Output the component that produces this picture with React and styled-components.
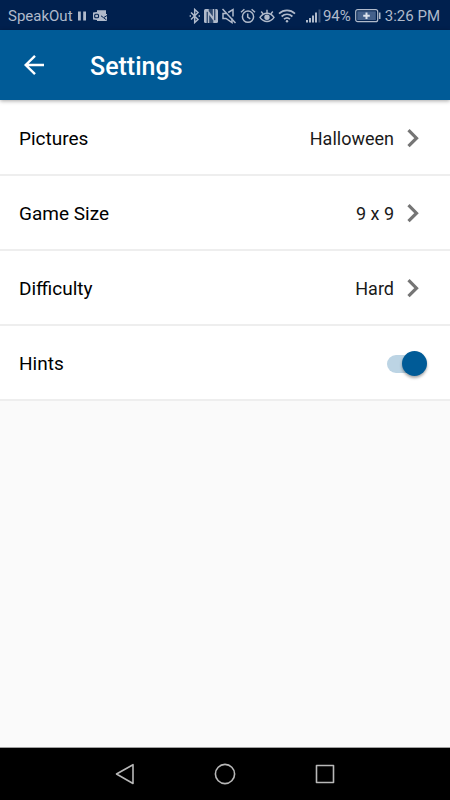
import React, { useState } from 'react';
import styled, { createGlobalStyle } from 'styled-components';

const GlobalStyle = createGlobalStyle`
    body {
        margin: 0;
        background: #fafafa;
        font-family: Roboto, 'Noto Sans', sans-serif;
    }
`;

const Screen = styled.div`
    min-height: 100vh;
    display: flex;
    flex-direction: column;
`;

const StatusBar = styled.div`
    box-sizing: border-box;
    height: 30px;
    padding: 1px 10px 0 8px;
    display: flex;
    align-items: center;
    justify-content: space-between;
    background: #00204e;
    color: #b0bacb;
    font-size: 15px;
    line-height: 20px;
    white-space: nowrap;
`;

const StatusGroup = styled.div`
    display: flex;
    align-items: center;
    gap: ${props => props.$gap}px;

    svg {
        display: block;
        flex: none;
    }
`;

const AppBar = styled.header`
    position: relative;
    height: 70px;
    padding: 0 20px;
    display: flex;
    align-items: center;
    gap: 42px;
    background: #005b97;
    box-shadow: 0 1px 4px rgba(0, 0, 0, 0.35);
`;

const BackButton = styled.button`
    width: 28px;
    height: 28px;
    padding: 0;
    border: none;
    background: none;
    color: white;
    cursor: pointer;

    svg {
        display: block;
    }
`;

const Title = styled.h1`
    margin: 0;
    padding-top: 4px;
    font-size: 25px;
    line-height: 32px;
    font-weight: 500;
    color: white;
`;

const List = styled.main`
    flex: 1;
`;

const Rows = styled.div`
    padding-top: 1px;
    background: white;
`;

const Row = styled.div`
    box-sizing: border-box;
    width: 100%;
    height: 75px;
    padding: 2px 23px 0 19px;
    display: flex;
    align-items: center;
    justify-content: space-between;
    border: none;
    border-bottom: 2px solid #eeeeee;
    background: white;
    color: black;
    font-family: inherit;
    font-size: 19px;
    line-height: 24px;
    text-align: left;
`;

const Value = styled.span`
    display: flex;
    align-items: center;
    gap: 12px;
    padding-right: 7px;
    font-size: 18px;
    color: #1a1a1a;
`;

const Switch = styled.input`
    appearance: none;
    position: relative;
    width: 40px;
    height: 26px;
    margin: 0;
    cursor: pointer;

    &::before {
        content: '';
        position: absolute;
        top: 4px;
        left: 0;
        width: 38px;
        height: 18px;
        border-radius: 9px;
        background: ${props => (props.checked ? '#bcd4e4' : '#c8c8c8')};
    }

    &::after {
        content: '';
        position: absolute;
        top: 0;
        left: ${props => (props.checked ? '15px' : '0')};
        width: 25px;
        height: 25px;
        border-radius: 50%;
        background: ${props => (props.checked ? '#005b97' : '#f5f5f5')};
        box-shadow: 0 2px 3px rgba(0, 0, 0, 0.35);
    }
`;

const NavBar = styled.nav`
    height: 52px;
    display: flex;
    align-items: center;
    justify-content: center;
    gap: 76px;
    border-top: 1px solid #a0a0a0;
    background: black;
`;

const NavButton = styled.button`
    width: 24px;
    height: 24px;
    padding: 0;
    border: none;
    background: none;
    color: #b8b8b8;
    cursor: pointer;

    svg {
        display: block;
    }
`;

const PauseIcon = () => (
    <svg width="10" height="10" viewBox="0 0 10 10" fill="currentColor">
        <path d="M0 0.5h2.8v9H0zM5.2 0.5H8v9H5.2z" />
    </svg>
);

const MailIcon = () => (
    <svg width="14" height="12" viewBox="0 0 14 12">
        <path d="M4 0.3h9v3.7h1V11H4z" fill="currentColor" />
        <path d="M8 5.8l2.6 1.9L14 5.5M11 8l2.5 2" fill="none" stroke="#00204e" strokeWidth="1" />
        <path d="M0 2.5l7.5-1v9l-7.5-1z" fill="currentColor" />
        <rect x="1.7" y="4.2" width="3.8" height="3.6" rx="1" fill="none" stroke="#00204e" strokeWidth="1.1" />
    </svg>
);

const BluetoothIcon = () => (
    <svg width="12" height="16" viewBox="0 0 12 16" fill="none" stroke="currentColor" strokeWidth="1.5">
        <path d="M2 4.5l7 7L5.7 14.5v-13L9 4.5l-7 7" />
        <path d="M0.6 8h1.4M9.6 8H11" />
    </svg>
);

const NfcIcon = () => (
    <svg width="14" height="16" viewBox="0 0 14 16" fill="none">
        <rect y="1" width="14" height="14" rx="1.5" fill="currentColor" />
        <path d="M3.2 15V3.8M10.8 1v11.2" stroke="#00204e" strokeWidth="1" />
        <path d="M5.2 15V7l4.1 5.6V15zM8.8 1v7.6L4.7 3V1z" fill="#00204e" opacity="0.75" />
    </svg>
);

const MuteIcon = () => (
    <svg width="16" height="16" viewBox="0 0 16 16" fill="none" stroke="currentColor" strokeWidth="1.5">
        <path d="M1.5 1l13 14" />
        <path d="M5 5.5H2v5h3l6 4v-4M7.2 4.5L12 1.5v7" />
    </svg>
);

const AlarmIcon = () => (
    <svg width="16" height="16" viewBox="0 0 16 16" fill="none" stroke="currentColor" strokeWidth="1.5">
        <circle cx="8" cy="8.7" r="5.6" />
        <path d="M7.7 5.5v3.7l2.6 1.6M1 4.2L4.4 1.3M15 4.2l-3.4-2.9" />
    </svg>
);

const EyeIcon = () => (
    <svg width="16" height="16" viewBox="0 0 16 16" fill="none" stroke="currentColor" strokeWidth="1.4">
        <path d="M1 9.3c3.8-5.5 10.2-5.5 14 0c-3.8 5.5-10.2 5.5-14 0z" />
        <circle cx="8" cy="9.2" r="2" fill="currentColor" />
        <path d="M8 5V1.8M4 5.8L2.2 3.5M12 5.8l1.8-2.3" />
    </svg>
);

const WifiIcon = () => (
    <svg width="18" height="16" viewBox="0 0 18 16" fill="none" stroke="currentColor" strokeWidth="1.7">
        <path d="M1 5.6c4.7-4.2 11.3-4.2 16 0M3.6 8.5c3.2-2.9 7.6-2.9 10.8 0M6 11.2c1.8-1.6 4.2-1.6 6 0" />
        <circle cx="9" cy="13.3" r="1.2" fill="currentColor" stroke="none" />
    </svg>
);

const SignalIcon = () => (
    <svg width="15" height="16" viewBox="0 0 15 16" fill="currentColor">
        <path d="M0 12h2v2.5H0zM3 10h2v4.5H3zM6 7.5h2v7H6zM9 4.5h2v10H9z" />
        <path d="M12.5 1.5h2v13h-2z" opacity="0.35" />
    </svg>
);

const BatteryIcon = () => (
    <svg width="26" height="14" viewBox="0 0 26 14" fill="none">
        <rect x="0.7" y="0.7" width="22" height="12" rx="2" stroke="currentColor" strokeWidth="1.2" />
        <rect x="2.3" y="2.3" width="18.5" height="8.8" fill="#45618b" />
        <path d="M11.5 3.5v6.5M8.2 6.7h6.6" stroke="#dce2ec" strokeWidth="2" />
        <path d="M24.7 3.5v6.5" stroke="currentColor" strokeWidth="1.6" />
    </svg>
);

const ArrowIcon = () => (
    <svg width="28" height="28" viewBox="0 0 28 28" fill="none" stroke="currentColor" strokeWidth="2.4">
        <path d="M24 14H5.5M15 4.8L5.7 14l9.3 9.2" />
    </svg>
);

const ChevronIcon = () => (
    <svg width="14" height="20" viewBox="0 0 14 20" fill="none" stroke="#757575" strokeWidth="3.2">
        <path d="M2.5 1.2l8 8-8 8" />
    </svg>
);

const BackIcon = () => (
    <svg width="24" height="24" viewBox="0 0 24 24" fill="none" stroke="currentColor" strokeWidth="1.6" strokeLinejoin="round">
        <path d="M20 2.7v18.8L3.5 12z" />
    </svg>
);

const HomeIcon = () => (
    <svg width="24" height="24" viewBox="0 0 24 24" fill="none" stroke="currentColor" strokeWidth="1.6">
        <circle cx="12" cy="12" r="9.6" />
    </svg>
);

const RecentIcon = () => (
    <svg width="24" height="24" viewBox="0 0 24 24" fill="none" stroke="currentColor" strokeWidth="1.6" strokeLinejoin="round">
        <rect x="3.5" y="3.5" width="17" height="17" />
    </svg>
);

const options = [
    { label: 'Pictures', value: 'Halloween' },
    { label: 'Game Size', value: '9 x 9' },
    { label: 'Difficulty', value: 'Hard' },
];

const App = () => {
    const [hints, setHints] = useState(true);

    return (
        <Screen>
            <GlobalStyle />
            <StatusBar>
                <StatusGroup $gap={5}>
                    <span>SpeakOut</span>
                    <PauseIcon />
                    <MailIcon />
                </StatusGroup>
                <StatusGroup $gap={10}>
                    <StatusGroup $gap={3}>
                        <BluetoothIcon />
                        <NfcIcon />
                        <MuteIcon />
                        <AlarmIcon />
                        <EyeIcon />
                        <WifiIcon />
                    </StatusGroup>
                    <StatusGroup $gap={4}>
                        <StatusGroup $gap={2}>
                            <SignalIcon />
                            <span>94%</span>
                        </StatusGroup>
                        <BatteryIcon />
                        <span>3:26 PM</span>
                    </StatusGroup>
                </StatusGroup>
            </StatusBar>
            <AppBar>
                <BackButton aria-label="Back"><ArrowIcon /></BackButton>
                <Title>Settings</Title>
            </AppBar>
            <List>
                <Rows>
                    {options.map(option => (
                        <Row as="button" key={option.label}>
                            <span>{option.label}</span>
                            <Value>
                                {option.value}
                                <ChevronIcon />
                            </Value>
                        </Row>
                    ))}
                    <Row>
                        <label htmlFor="hints">Hints</label>
                        <Switch
                            id="hints"
                            type="checkbox"
                            checked={hints}
                            onChange={e => setHints(e.target.checked)}
                        />
                    </Row>
                </Rows>
            </List>
            <NavBar>
                <NavButton aria-label="Back"><BackIcon /></NavButton>
                <NavButton aria-label="Home"><HomeIcon /></NavButton>
                <NavButton aria-label="Recent apps"><RecentIcon /></NavButton>
            </NavBar>
        </Screen>
    );
};

export default App;
